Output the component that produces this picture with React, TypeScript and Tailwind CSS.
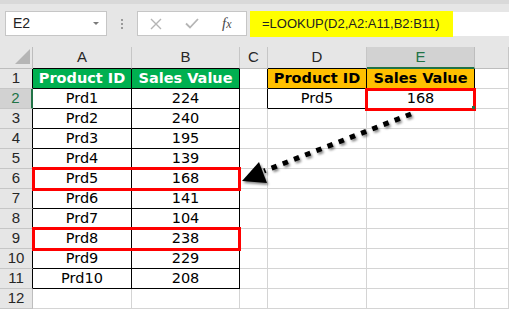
import React from 'react';

const COLS = ['', 'A', 'B', 'C', 'D', 'E', ''];

const ROWS: string[][] = [
  ['Product ID', 'Sales Value', '', 'Product ID', 'Sales Value'],
  ['Prd1', '224', '', 'Prd5', '168'],
  ['Prd2', '240'],
  ['Prd3', '195'],
  ['Prd4', '139'],
  ['Prd5', '168'],
  ['Prd6', '141'],
  ['Prd7', '104'],
  ['Prd8', '238'],
  ['Prd9', '229'],
  ['Prd10', '208'],
  [],
];

// r is 1-based row, c is 1-based column (A = 1)
const inTable = (r: number, c: number) =>
  ((c === 1 || c === 2) && r >= 1 && r <= 11) || ((c === 4 || c === 5) && (r === 1 || r === 2));

const Cell: React.FC<{ r: number; c: number; text: string }> = ({ r, c, text }) => {
  const right = inTable(r, c) || inTable(r, c + 1);
  const bottom = inTable(r, c) || inTable(r + 1, c);
  const green = r === 1 && (c === 1 || c === 2);
  const orange = r === 1 && (c === 4 || c === 5);
  return (
    <div
      className={`flex items-center justify-center border-r border-b text-[14.5px] leading-none ${
        right ? 'border-r-black' : 'border-r-[#d4d4d4]'
      } ${bottom ? 'border-b-black' : 'border-b-[#d4d4d4]'} ${
        green ? 'bg-[#00b050] text-white font-bold' : orange ? 'bg-[#ffc000] text-black font-bold' : 'bg-white text-black'
      }`}
    >
      {text}
    </div>
  );
};

export default function App() {
  return (
    <div
      className="relative w-[509px] h-[309px] overflow-hidden bg-white"
      style={{ fontFamily: '"DejaVu Sans", Verdana, sans-serif' }}
    >
      {/* ribbon edge */}
      <div className="h-[4px] bg-[#d9d9d9]" />

      {/* name box + formula bar */}
      <div
        className="h-[43px] bg-[#e6e6e6] flex items-start pt-[7px]"
        style={{ fontFamily: '"Liberation Sans", Arial, sans-serif' }}
      >
        <div className="ml-[5px] w-[102px] h-[25px] bg-white border border-[#c6c6c6] flex items-center justify-between pl-[7px] pr-[7px]">
          <span className="text-[14px] text-[#222]">E2</span>
          <span className="w-0 h-0 border-l-[3px] border-r-[3px] border-t-[3px] border-l-transparent border-r-transparent border-t-[#7a7a7a]" />
        </div>
        <div className="ml-[14px] mt-[8px] flex flex-col gap-[2px]">
          <span className="w-[2px] h-[2px] bg-[#9a9a9a]" />
          <span className="w-[2px] h-[2px] bg-[#9a9a9a]" />
          <span className="w-[2px] h-[2px] bg-[#9a9a9a]" />
        </div>
        <div className="ml-[14px] w-[110px] h-[25px] bg-white border border-[#c6c6c6] flex items-center">
          <svg width="12" height="12" viewBox="0 0 12 12" className="ml-[12px]">
            <path d="M1 1 L11 11 M11 1 L1 11" stroke="#b5b5b5" strokeWidth="1.4" fill="none" />
          </svg>
          <svg width="14" height="11" viewBox="0 0 14 11" className="ml-[23px]">
            <path d="M1 5.5 L5 9.5 L13 1" stroke="#b5b5b5" strokeWidth="1.8" fill="none" />
          </svg>
          <span
            className="ml-[23px] text-[15px] italic text-[#4a4a4a] leading-none"
            style={{ fontFamily: '"Liberation Serif", serif' }}
          >
            f<span className="text-[12px]">x</span>
          </span>
        </div>
        <div className="ml-[3px] flex-1 flex items-start">
          <div className="w-[203px] h-[26px] bg-[#ffff00] flex items-center pl-[12px] text-[13px] text-[#222]">
            =LOOKUP(D2,A2:A11,B2:B11)
          </div>
          <div className="flex-1 h-[24px] mt-[1px] bg-white" />
        </div>
      </div>

      {/* sheet grid */}
      <div className="grid grid-cols-[33px_99px_108px_28px_99px_108px_34px] grid-rows-[22px_repeat(12,20px)]">
        {COLS.map((col, c) => {
          if (c === 0)
            return (
              <div key="corner" className="relative bg-[#e6e6e6] border-r border-b border-r-[#bdbdbd] border-b-[#bdbdbd]">
                <svg width="16" height="16" className="absolute left-[15px] top-[2px]">
                  <path d="M15 0 L15 15 L0 15 Z" fill="#b5b5b5" />
                </svg>
              </div>
            );
          const selected = col === 'E';
          const tableBelow = c === 1 || c === 2 || c === 4;
          return (
            <div
              key={col + c}
              className={`flex items-center justify-center text-[15px] border-r ${
                selected
                  ? 'bg-[#d2d2d2] text-[#217346] border-b-2 border-b-[#217346] border-r-[#bdbdbd]'
                  : `bg-[#e6e6e6] text-[#262626] border-b border-r-[#c6c6c6] ${tableBelow ? 'border-b-black' : 'border-b-[#bdbdbd]'}`
              }`}
              style={{ fontFamily: '"Liberation Sans", Arial, sans-serif' }}
            >
              {col}
            </div>
          );
        })}

        {ROWS.map((row, i) => {
          const r = i + 1;
          const selected = r === 2;
          return (
            <React.Fragment key={r}>
              <div
                className={`flex items-center justify-center text-[15px] border-b border-b-[#c6c6c6] ${
                  selected
                    ? 'bg-[#d2d2d2] text-[#217346] border-r-2 border-r-[#217346]'
                    : `bg-[#e6e6e6] text-[#262626] border-r ${r <= 11 ? 'border-r-black' : 'border-r-[#bdbdbd]'}`
                }`}
                style={{ fontFamily: '"Liberation Sans", Arial, sans-serif' }}
              >
                {r}
              </div>
              {[1, 2, 3, 4, 5, 6].map((c) => (
                <Cell key={c} r={r} c={c} text={row[c - 1] ?? ''} />
              ))}
            </React.Fragment>
          );
        })}
      </div>

      {/* highlight boxes */}
      <div className="absolute left-[32px] top-[167px] w-[209px] h-[24px] border-[3px] border-[#ff0000]" />
      <div className="absolute left-[32px] top-[227px] w-[209px] h-[24px] border-[3px] border-[#ff0000]" />
      <div className="absolute left-[365px] top-[88px] w-[111px] h-[23px] border-[3px] border-[#ff0000]" />
      <div className="absolute left-[472px] top-[106px] w-[3px] h-[3px] bg-[#217346]" />

      {/* dotted arrow */}
      <svg className="absolute left-0 top-0 pointer-events-none" width="509" height="309">
        <defs>
          <filter id="sh" x="-20%" y="-20%" width="140%" height="140%">
            <feDropShadow dx="1.5" dy="2" stdDeviation="1.3" floodColor="#000" floodOpacity="0.45" />
          </filter>
        </defs>
        <g filter="url(#sh)">
          <line x1="411" y1="114" x2="264" y2="171" stroke="#000" strokeWidth="5" strokeDasharray="5.5 6.5" />
          <polygon points="242,181 259,162 267,183" fill="#000" />
        </g>
      </svg>
    </div>
  );
}
